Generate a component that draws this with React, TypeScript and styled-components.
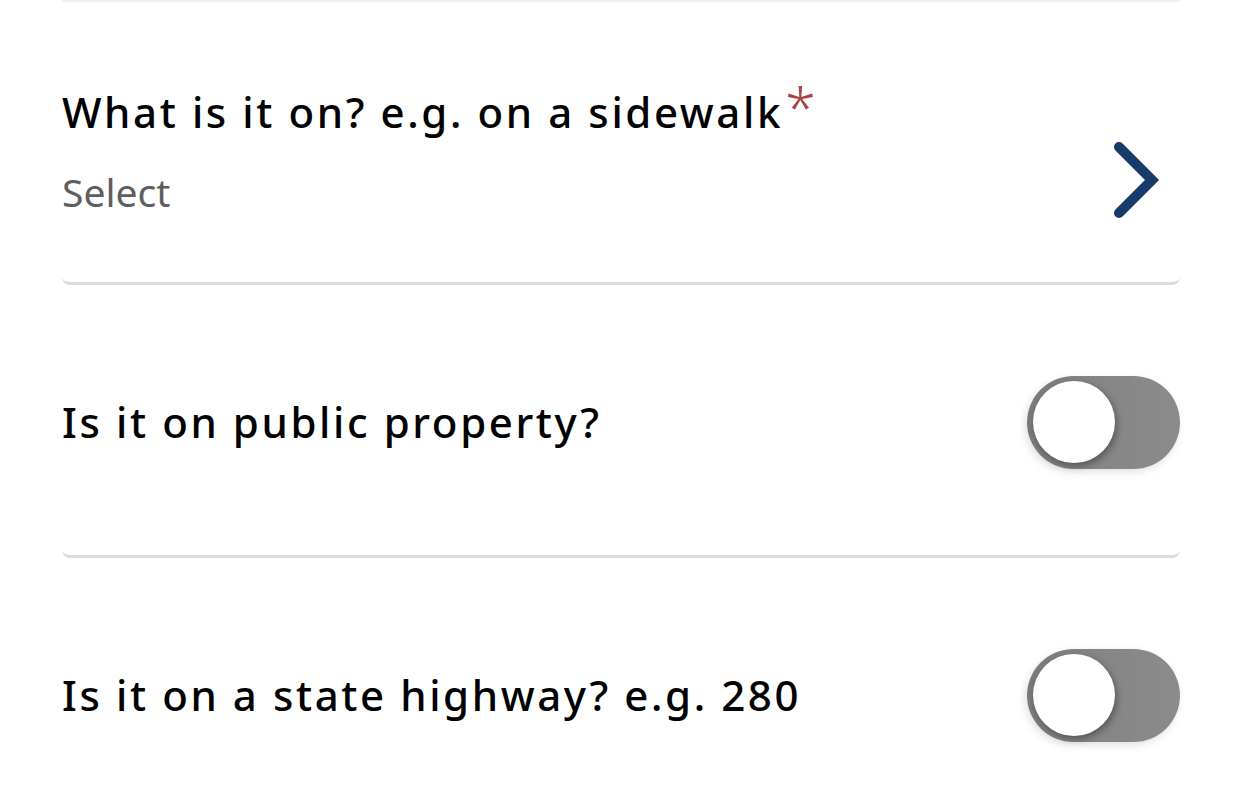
import React from "react";
import styled, { createGlobalStyle } from "styled-components";

const Global = createGlobalStyle`
  html, body { margin: 0; padding: 0; background: #ffffff; }
  body { font-family: "Noto Sans", "Open Sans", sans-serif; }
  * { box-sizing: border-box; }
`;

const Page = styled.div`
  width: 1242px;
  height: 812px;
  overflow: hidden;
  padding: 0 62px;
  background: #fff;
`;

const List = styled.div`
  display: flex;
  flex-direction: column;
`;

const PrevEdge = styled.div`
  height: 2px;
  border-bottom: 2px solid #efefef;
  border-radius: 0 0 8px 8px;
`;

const Card = styled.div<{ $tall?: boolean }>`
  display: flex;
  justify-content: space-between;
  align-items: ${(p) => (p.$tall ? "flex-start" : "center")};
  height: ${(p) => (p.$tall ? "283px" : "273px")};
  padding-top: ${(p) => (p.$tall ? "86px" : "4px")};
  border-bottom: 3px solid #dcdcdc;
  border-radius: 0 0 8px 8px;
`;

const Field = styled.div`
  display: flex;
  flex-direction: column;
  gap: 33px;
`;

const Label = styled.div`
  font-family: "Noto Sans", sans-serif;
  font-size: 42px;
  line-height: 48px;
  font-weight: 500;
  letter-spacing: 2.6px;
  color: #000;
  display: flex;
  align-items: flex-start;
`;

const Required = styled.span`
  color: #a8433f;
  margin-left: 2px;
  font-size: 56px;
  line-height: 40px;
  font-weight: 300;
  letter-spacing: 0;
  margin-top: -2px;
`;

const Placeholder = styled.div`
  font-family: "Noto Sans", sans-serif;
  font-size: 39px;
  line-height: 46px;
  color: #5e5e5e;
`;

const ChevronBox = styled.div`
  margin-top: 52px;
  margin-right: 18px;
  width: 52px;
  height: 80px;
  display: flex;
  align-items: center;
  justify-content: center;
`;

const Track = styled.div`
  position: relative;
  width: 153px;
  height: 93px;
  border-radius: 47px;
  background: linear-gradient(90deg, #7a7a7a 0%, #858585 40%, #8b8b8b 100%);
  box-shadow: -2px 3px 8px rgba(0, 0, 0, 0.12);
  flex-shrink: 0;
`;

const Knob = styled.div`
  position: absolute;
  left: 6px;
  top: 5px;
  width: 82px;
  height: 82px;
  border-radius: 50%;
  background: #ffffff;
  box-shadow: 2px 3px 7px rgba(0, 0, 0, 0.35);
`;

function Toggle() {
  return (
    <Track>
      <Knob />
    </Track>
  );
}

export default function App() {
  return (
    <Page>
      <Global />
      <List>
        <PrevEdge />
        <Card $tall>
          <Field>
            <Label>
              What is it on? e.g. on a sidewalk<Required>*</Required>
            </Label>
            <Placeholder>Select</Placeholder>
          </Field>
          <ChevronBox>
            <svg width="52" height="80" viewBox="0 0 52 80">
              <polyline
                points="9,7 42,40 9,73"
                fill="none"
                stroke="#173a6b"
                strokeWidth="10"
                strokeLinecap="round"
                strokeLinejoin="miter"
              />
            </svg>
          </ChevronBox>
        </Card>
        <Card>
          <Label>Is it on public property?</Label>
          <Toggle />
        </Card>
        <Card>
          <Label>Is it on a state highway? e.g. 280</Label>
          <Toggle />
        </Card>
      </List>
    </Page>
  );
}
